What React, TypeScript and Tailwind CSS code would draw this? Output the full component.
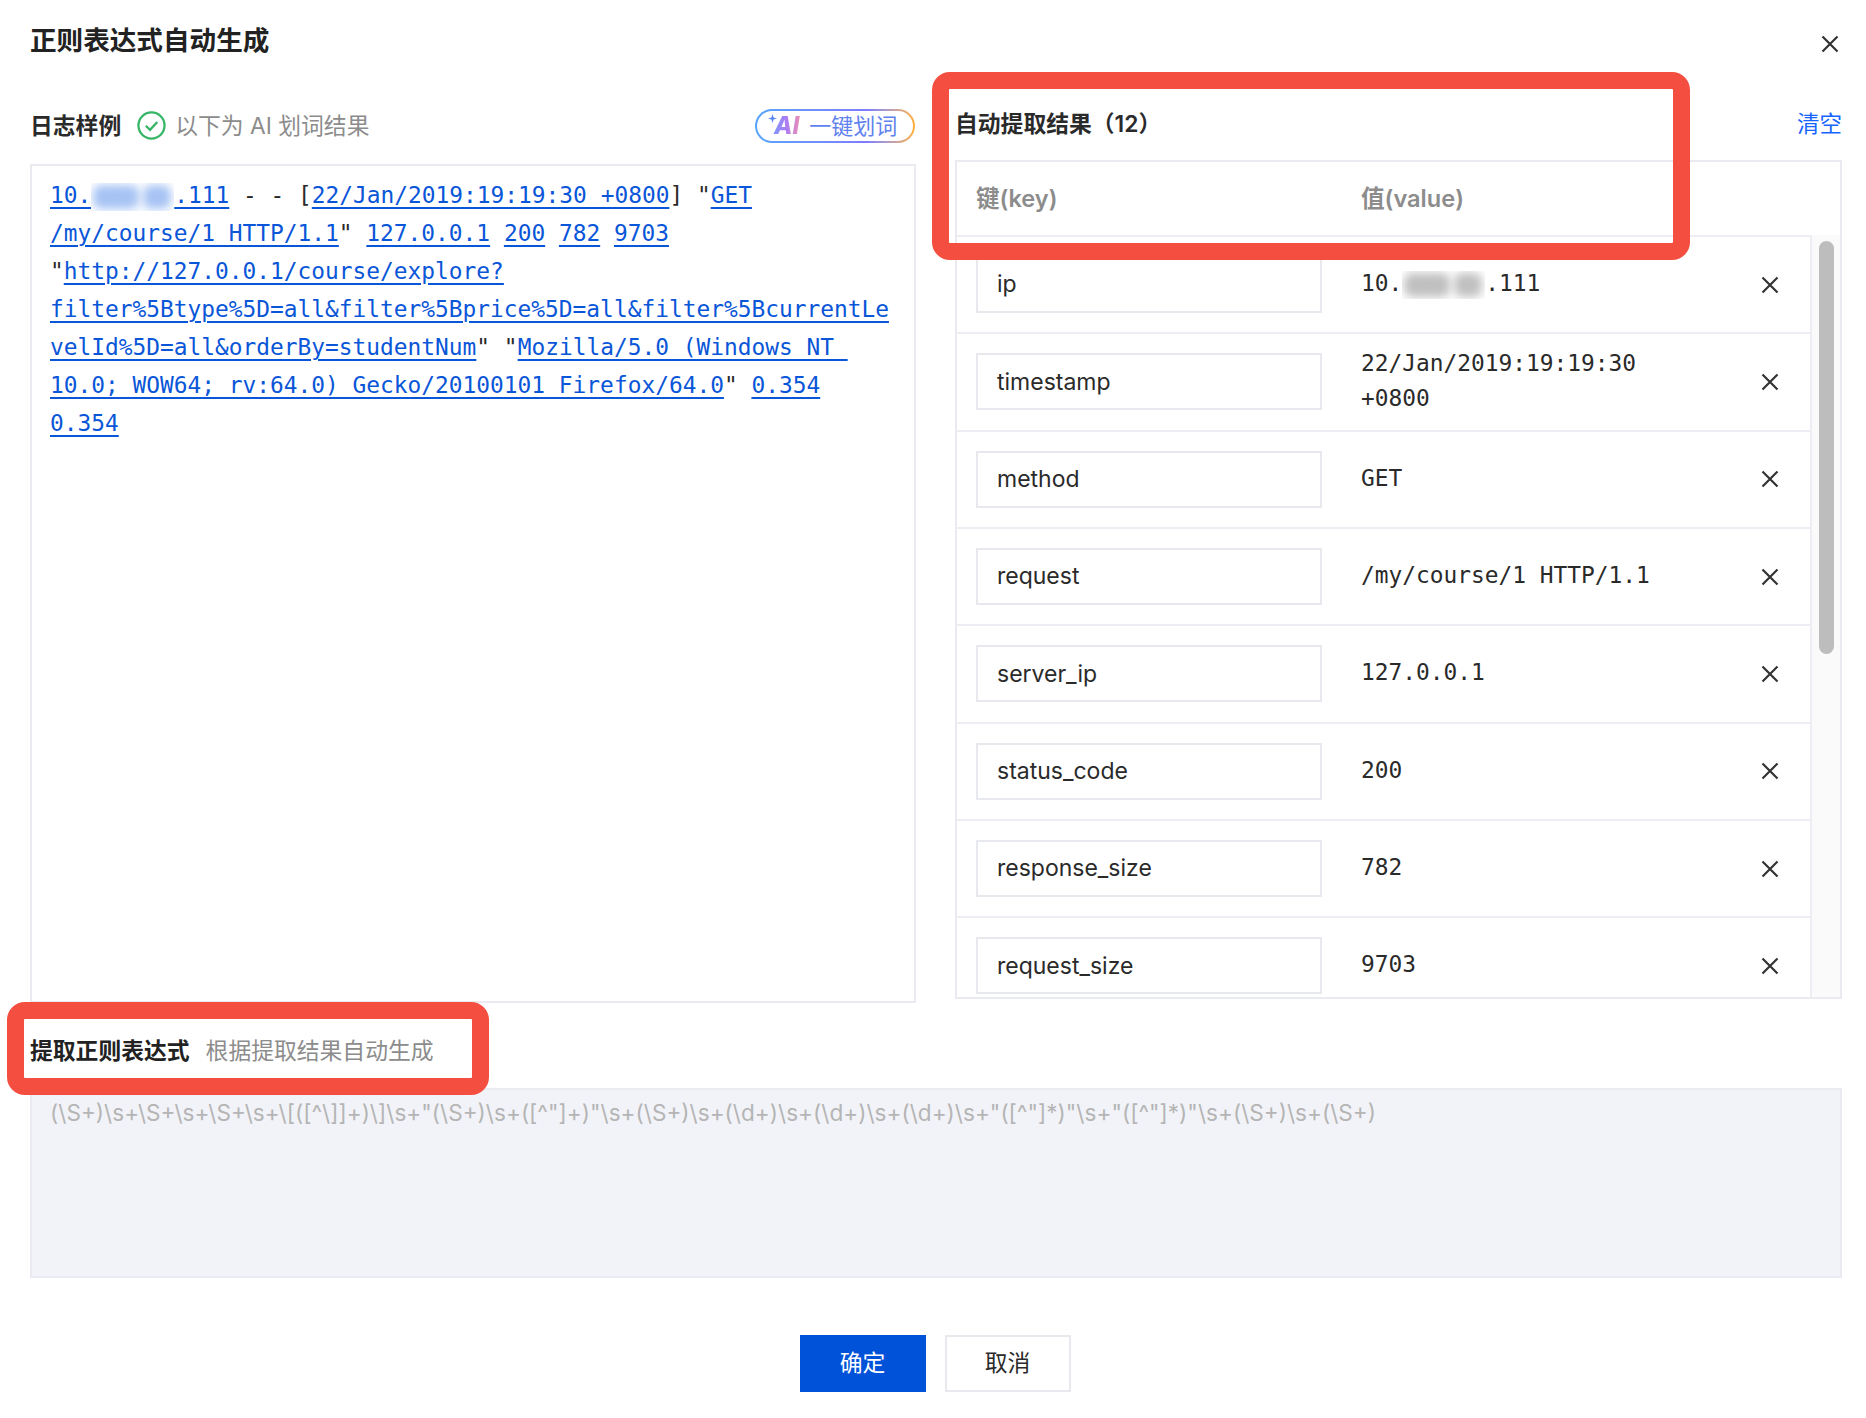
const sans = "font-['Inter','Noto_Sans_CJK_SC',sans-serif]";
const mono = "font-['DejaVu_Sans_Mono','Noto_Sans_CJK_SC',monospace]";

const rows: [string, string][] = [
  ["ip", "10.|.111"],
  ["timestamp", "22/Jan/2019:19:19:30 +0800"],
  ["method", "GET"],
  ["request", "/my/course/1 HTTP/1.1"],
  ["server_ip", "127.0.0.1"],
  ["status_code", "200"],
  ["response_size", "782"],
  ["request_size", "9703"],
];

function Smudge({ blue }: { blue?: boolean }) {
  const blob = blue ? "bg-[#a6c3f4]" : "bg-[#c0c0c0]";
  return (
    <span className="inline-flex w-[83px] h-[28px] items-center overflow-hidden bg-white align-[-6px]">
      <span className={`block ml-[2px] w-[46px] h-[24px] rounded-lg blur-[5px] ${blob}`} />
      <span className={`block ml-[4px] w-[28px] h-[24px] rounded-lg blur-[5px] ${blob}`} />
    </span>
  );
}

function L({ children }: { children: React.ReactNode }) {
  return <a className="underline underline-offset-[4px] decoration-[2px]">{children}</a>;
}

function Cross({ size = 18 }: { size?: number }) {
  return (
    <svg width={size} height={size} viewBox="0 0 18 18" fill="none" stroke="#333" strokeWidth="2.2">
      <path d="M1.5 1.5 16.5 16.5M16.5 1.5 1.5 16.5" />
    </svg>
  );
}

function LogSample() {
  return (
    <div className={`${mono} text-[22.85px] leading-[38px] text-[#2a2a2a] whitespace-pre`}>
      <div>
        <a className="text-[#0a56d8] underline underline-offset-[4px] decoration-[2px]">10.</a>
        <Smudge blue />
        <a className="text-[#0a56d8] underline underline-offset-[4px] decoration-[2px]">.111</a>
        {" - - ["}
        <span className="text-[#0a56d8]"><L>22/Jan/2019:19:19:30 +0800</L></span>
        {'] "'}
        <span className="text-[#0a56d8]"><L>GET</L></span>
      </div>
      <div>
        <span className="text-[#0a56d8]"><L>/my/course/1 HTTP/1.1</L></span>
        {'" '}
        <span className="text-[#0a56d8]"><L>127.0.0.1</L></span>{" "}
        <span className="text-[#0a56d8]"><L>200</L></span>{" "}
        <span className="text-[#0a56d8]"><L>782</L></span>{" "}
        <span className="text-[#0a56d8]"><L>9703</L></span>
      </div>
      <div>
        {'"'}
        <span className="text-[#0a56d8]"><L>http://127.0.0.1/course/explore?</L></span>
      </div>
      <div className="text-[#0a56d8]">
        <L>filter%5Btype%5D=all&filter%5Bprice%5D=all&filter%5BcurrentLe</L>
      </div>
      <div>
        <span className="text-[#0a56d8]"><L>velId%5D=all&orderBy=studentNum</L></span>
        {'" "'}
        <span className="text-[#0a56d8]"><L>{"Mozilla/5.0 (Windows NT "}</L></span>
      </div>
      <div>
        <span className="text-[#0a56d8]"><L>10.0; WOW64; rv:64.0) Gecko/20100101 Firefox/64.0</L></span>
        {'" '}
        <span className="text-[#0a56d8]"><L>0.354</L></span>
      </div>
      <div className="text-[#0a56d8]">
        <L>0.354</L>
      </div>
    </div>
  );
}

function AiButton() {
  return (
    <div className="w-[160px] h-[34px] rounded-full p-[2px] bg-gradient-to-r from-[#55a4ff] via-[#7f7bff] via-70% to-[#ffb02e]">
      <div className="w-full h-full rounded-full bg-white flex items-center pl-[14px] gap-[8px]">
        <span className="relative font-['Inter',sans-serif] italic font-extrabold text-[24px] leading-none bg-gradient-to-r from-[#6f9cff] via-[#a97cf5] to-[#f08bb0] bg-clip-text text-transparent pl-[3px] pr-[2px]">
          AI
          <svg className="absolute left-[-3px] top-[0px]" width="9" height="9" viewBox="0 0 10 10" fill="#5b86f5">
            <path d="M5 0 6.2 3.8 10 5 6.2 6.2 5 10 3.8 6.2 0 5 3.8 3.8Z" />
          </svg>
        </span>
        <span className="text-[22px] leading-none text-[#5f82f0]">一键划词</span>
      </div>
    </div>
  );
}

function Row({ k, v }: { k: string; v: string }) {
  const parts = v.split("|");
  return (
    <div className="h-[97.33px] shrink-0 flex items-center pl-[19px] border-b-2 border-[#eceef3]">
      <div className="w-[346px] h-[57px] shrink-0 border-2 border-[#e7e9ef] flex items-center pl-[19px] text-[23px] text-[#2a2a2a]">
        {k}
      </div>
      <div className={`${mono} ml-[39px] w-[340px] text-[22.85px] leading-[35px] text-[#2a2a2a] -translate-y-[1px]`}>
        {parts.length === 2 ? (
          <span className="whitespace-pre">
            {parts[0]}
            <Smudge />
            {parts[1]}
          </span>
        ) : (
          v
        )}
      </div>
      <div className="ml-[60px]">
        <Cross />
      </div>
    </div>
  );
}

export default function App() {
  return (
    <div className={`${sans} relative w-[1866px] h-[1418px] bg-white pl-[30px] pr-[24px] flex flex-col overflow-hidden`}>
      <div className="h-[88px] shrink-0 flex justify-between items-start">
        <h1 className="mt-[22px] text-[26.6px] leading-[36px] font-semibold text-[#222]">正则表达式自动生成</h1>
        <div className="mt-[35px] mr-[3px]">
          <Cross />
        </div>
      </div>

      <div className="h-[915px] shrink-0 flex gap-[39px]">
        <div className="w-[886px] flex flex-col">
          <div className="h-[76px] shrink-0 flex items-start pt-[21px]">
            <span className="text-[22.8px] leading-[34px] font-semibold text-[#2a2a2a]">日志样例</span>
            <svg className="ml-[16px] mt-[2px]" width="29" height="29" viewBox="0 0 28 28" fill="none" stroke="#35b566" strokeWidth="2.2">
              <circle cx="14" cy="14" r="12.6" />
              <path d="M8.5 14.2 12.6 18.2 19.6 10.6" />
            </svg>
            <span className="ml-[9px] text-[22.8px] leading-[34px] text-[#8c8c8c]">以下为 AI 划词结果</span>
            <div className="ml-auto mr-[1px]">
              <AiButton />
            </div>
          </div>
          <div className="flex-1 border-2 border-[#e9ebf1] pl-[18px] pt-[10px]">
            <LogSample />
          </div>
        </div>

        <div className="w-[887px] flex flex-col pb-[4px]">
          <div className="h-[72px] shrink-0 flex justify-between items-start pt-[19px]">
            <span className="text-[22.8px] leading-[34px] font-semibold text-[#2a2a2a]">自动提取结果（12）</span>
            <span className="text-[22.5px] leading-[34px] text-[#1664ff]">清空</span>
          </div>
          <div className="flex-1 min-h-0 border-2 border-[#e9ebf1] flex flex-col">
            <div className="h-[73px] shrink-0 flex items-center pl-[19px] text-[23.6px] font-semibold text-[#8c8c8c]">
              <span className="w-[385px]">键(key)</span>
              <span>值(value)</span>
            </div>
            <div className="flex-1 min-h-0 flex">
              <div className="w-[855px] shrink-0 border-t-2 border-r-2 border-[#eceef3] overflow-hidden flex flex-col">
                {rows.map(([k, v]) => (
                  <Row key={k} k={k} v={v} />
                ))}
              </div>
              <div className="flex-1 bg-[#fafafa] pt-[6px] pl-[7px]">
                <div className="w-[15px] h-[413px] rounded-full bg-[#bdbdbd]" />
              </div>
            </div>
          </div>
        </div>
      </div>

      <div className="h-[85px] shrink-0 flex items-center pt-[12px]">
        <span className="text-[22.8px] font-semibold text-[#222]">提取正则表达式</span>
        <span className="ml-[16px] text-[22.8px] text-[#8c8c8c]">根据提取结果自动生成</span>
      </div>
      <div className="h-[190px] shrink-0 bg-[#f2f3f8] border-2 border-[#e9ebf1] pl-[18px] pt-[8px] text-[22.6px] leading-[30px] text-[#b5b5b5]">
        {'(\\S+)\\s+\\S+\\s+\\S+\\s+\\[([^\\]]+)\\]\\s+"(\\S+)\\s+([^"]+)"\\s+(\\S+)\\s+(\\d+)\\s+(\\d+)\\s+(\\d+)\\s+"([^"]*)"\\s+"([^"]*)"\\s+(\\S+)\\s+(\\S+)'}
      </div>
      <div className="mt-[57px] pr-[2px] flex justify-center gap-[19px]">
        <button className="w-[126px] h-[57px] bg-[#0052d9] text-white text-[22.8px]">确定</button>
        <button className="w-[126px] h-[57px] bg-white border-2 border-[#e7e9ef] text-[#2a2a2a] text-[22.8px]">取消</button>
      </div>

      {/* red callouts drawn over the shot */}
      <div className="absolute left-[932px] top-[72px] w-[758px] h-[188px] border-[17px] border-[#f44e41] rounded-[18px] pointer-events-none" />
      <div className="absolute left-[7px] top-[1002px] w-[482px] h-[93px] border-[17px] border-[#f44e41] rounded-[18px] pointer-events-none" />
    </div>
  );
}
